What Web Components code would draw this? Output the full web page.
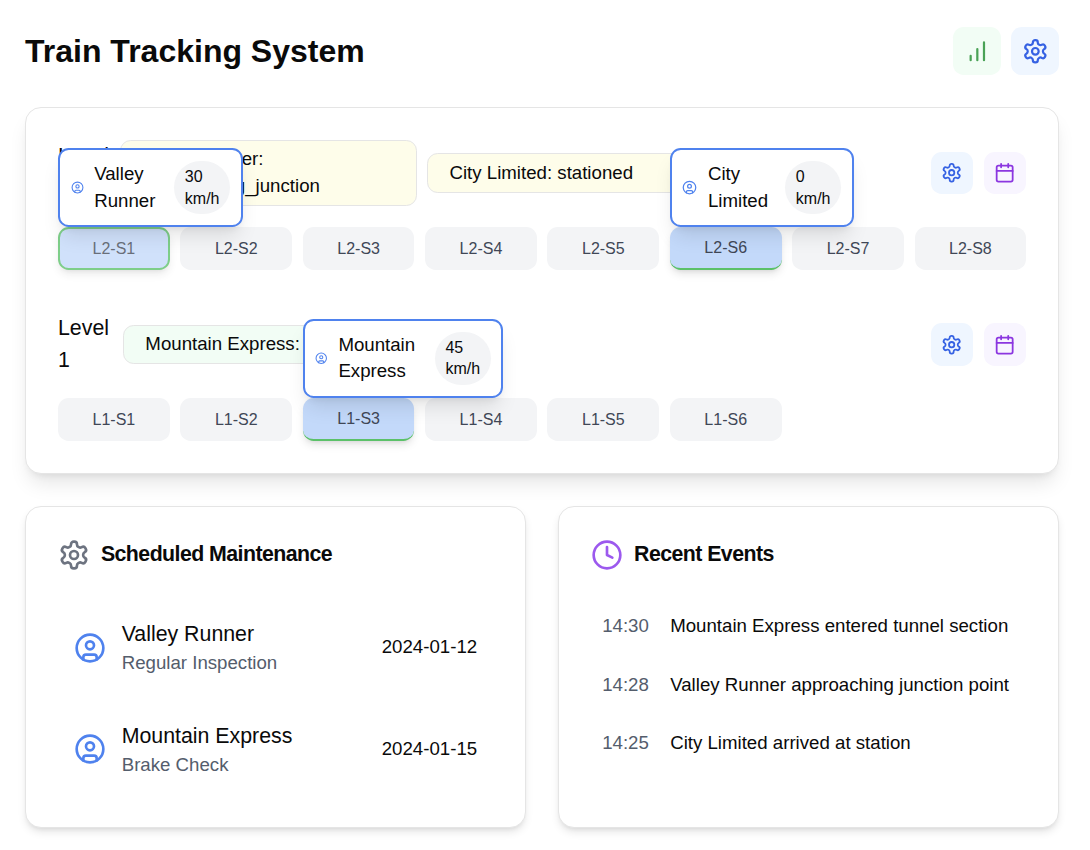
<!DOCTYPE html>
<html lang="en">
<head>
<meta charset="utf-8">
<title>Train Tracking System</title>
<style>
html,body{margin:0;background:#fff}
body{font-family:"Liberation Sans",Arial,sans-serif;color:#0a0a0a;font-size:18.67px;line-height:26.67px;height:850px;overflow:hidden}
</style>
</head>
<body>
<train-app></train-app>
<script>
const define = (name, html, init) => customElements.define(name, class extends HTMLElement {
  constructor() {
    super();
    const t = document.createElement('template');
    t.innerHTML = html;
    this.attachShadow({ mode: 'open' }).appendChild(t.content.cloneNode(true));
  }
  connectedCallback() { if (init) init(this, this.shadowRoot); }
});

const ICONS = {
  gear: '<path d="M12.22 2h-.44a2 2 0 0 0-2 2v.18a2 2 0 0 1-1 1.73l-.43.25a2 2 0 0 1-2 0l-.15-.08a2 2 0 0 0-2.73.73l-.22.38a2 2 0 0 0 .73 2.73l.15.1a2 2 0 0 1 1 1.72v.51a2 2 0 0 1-1 1.74l-.15.09a2 2 0 0 0-.73 2.73l.22.38a2 2 0 0 0 2.73.73l.15-.08a2 2 0 0 1 2 0l.43.25a2 2 0 0 1 1 1.73V20a2 2 0 0 0 2 2h.44a2 2 0 0 0 2-2v-.18a2 2 0 0 1 1-1.73l.43-.25a2 2 0 0 1 2 0l.15.08a2 2 0 0 0 2.73-.73l.22-.39a2 2 0 0 0-.73-2.73l-.15-.08a2 2 0 0 1-1-1.74v-.5a2 2 0 0 1 1-1.74l.15-.09a2 2 0 0 0 .73-2.73l-.22-.38a2 2 0 0 0-2.73-.73l-.15.08a2 2 0 0 1-2 0l-.43-.25a2 2 0 0 1-1-1.73V4a2 2 0 0 0-2-2z"/><circle cx="12" cy="12" r="3"/>',
  bars: '<path d="M12 20V10M18 20V4M6 20v-4"/>',
  calendar: '<path d="M8 2v4M16 2v4M3 10h18"/><rect width="18" height="18" x="3" y="4" rx="2"/>',
  clock: '<circle cx="12" cy="12" r="10"/><path d="M12 6v6l4 2"/>',
  user: '<circle cx="12" cy="12" r="10"/><circle cx="12" cy="10" r="3"/><path d="M7 20.662V19a2 2 0 0 1 2-2h6a2 2 0 0 1 2 2v1.662"/>'
};

define('ui-icon', `<style>:host{display:block;flex:none}svg{display:block;width:100%;height:100%}</style>
<svg viewBox="0 0 24 24" fill="none" stroke="currentColor" stroke-width="2" stroke-linecap="round" stroke-linejoin="round"></svg>`,
(el, root) => {
  const s = el.getAttribute('size');
  el.style.width = el.style.height = s + 'px';
  root.querySelector('svg').innerHTML = ICONS[el.getAttribute('name')];
});

define('icon-button', `<style>
:host{display:flex;align-items:center;justify-content:center;flex:none;width:42.4px;height:42.67px;border-radius:10.67px}
:host([large]){width:48px;height:48px;border-radius:10.67px}
:host([tone=green]){background:#f2fdf5;color:#4aa256}
:host([tone=blue]){background:#eff6ff;color:#3662e3}
:host([tone=purple]){background:#f8f5ff;color:#8b36e0}
</style><slot></slot>`);

define('status-pill', `<style>
:host{display:block;box-sizing:border-box;flex:none;border:1px solid #e5e5e5;border-radius:10.67px;padding:5.33px 21.2px;background:#fefdea;white-space:nowrap;font-size:18.67px;line-height:26.67px}
:host([tone=green]){background:#f2fdf5}
</style><slot></slot>`);

define('train-marker', `<style>
:host{position:absolute;bottom:43.1px;left:0;z-index:5;box-sizing:border-box;height:78.67px;border:2px solid #4f82ee;border-radius:10.67px;background:#fff;padding:10.67px;display:flex;align-items:center;gap:10.5px;color:#0a0a0a;box-shadow:0 13px 20px -4px rgba(0,0,0,.1),0 5px 8px -5px rgba(0,0,0,.1)}
ui-icon{color:#4f82ee}
.name{flex:1;font-size:18.67px;line-height:26.67px}
.speed{box-sizing:border-box;width:56px;flex:none;font-size:16px;line-height:21.33px;background:#f3f4f6;border-radius:999px;padding:5.33px 10.67px}
</style><ui-icon name="user"></ui-icon><div class="name"><slot></slot></div><div class="speed"></div>`,
(el, root) => {
  el.style.width = el.getAttribute('width') + 'px';
  const ic = root.querySelector('ui-icon'), s = el.getAttribute('icon');
  ic.style.width = ic.style.height = s + 'px';
  root.querySelector('.speed').innerHTML = el.getAttribute('speed') + '<br>km/h';
});

define('track-section', `<style>
:host{display:block;position:relative;height:42.67px}
.cell{box-sizing:border-box;height:100%;display:flex;align-items:center;justify-content:center;border-radius:10.67px;background:#f3f4f6;color:#404756;font-size:16px;line-height:21.33px}
:host([state=busy]) .cell{background:#c3d9fa;border-bottom:2px solid #5bc169;box-shadow:0 5px 8px -1px rgba(0,0,0,.1),0 3px 5px -3px rgba(0,0,0,.1)}
:host([state=pulse]) .cell{background:#c3d9fa;border:2px solid #5bc169;opacity:.78;box-shadow:0 5px 8px -1px rgba(0,0,0,.1),0 3px 5px -3px rgba(0,0,0,.1)}
</style><div class="cell"></div><slot></slot>`,
(el, root) => { root.querySelector('.cell').textContent = el.getAttribute('label'); });

define('track-level', `<style>
:host{display:block}
.head{display:flex;align-items:center;gap:10.67px;margin-bottom:21.33px}
.label{flex:none;width:54.5px;font-size:21.33px;line-height:32px;margin:-.8px 0 .8px}
:host([narrow]) .label{width:51.7px}
.pills{display:flex;align-items:center;gap:10.67px;flex:1;min-width:0}
.tools{display:flex;gap:10.67px}
.tracks{display:grid;grid-template-columns:repeat(8,1fr);gap:10.6px}
</style>
<div class="head"><div class="label"><slot name="label"></slot></div><div class="pills"><slot name="pill"></slot></div>
<div class="tools"><icon-button tone="blue"><ui-icon name="gear" size="21.33"></ui-icon></icon-button><icon-button tone="purple"><ui-icon name="calendar" size="21.33"></ui-icon></icon-button></div></div>
<div class="tracks"><slot></slot></div>`);

define('ui-card', `<style>
:host{display:block;box-sizing:border-box;border:1px solid #e5e5e5;border-radius:16px;padding:32px;background:#fff;box-shadow:0 5px 8px -1px rgba(0,0,0,.1),0 3px 5px -3px rgba(0,0,0,.1)}
:host([raised]){box-shadow:0 13px 20px -4px rgba(0,0,0,.1),0 5px 8px -5px rgba(0,0,0,.1)}
</style><slot></slot>`);

define('card-title', `<style>
:host{display:flex;align-items:center;gap:10.9px;height:32px;margin-bottom:31.7px}
h2{margin:0 0 2px;font-size:21.33px;line-height:32px;font-weight:700;letter-spacing:-.56px}
</style><slot name="icon"></slot><h2><slot></slot></h2>`);

define('maintenance-item', `<style>
:host{display:flex;align-items:center;gap:15.7px;padding:16px;margin-bottom:10.67px}
ui-icon{color:#4f82ee}
.info{flex:1}.name{font-size:21.33px;line-height:32px}
.task{color:#545d6c}
</style><ui-icon name="user" size="32"></ui-icon><div class="info"><div class="name"><slot></slot></div><div class="task"><slot name="task"></slot></div></div><div><slot name="date"></slot></div>`);

define('event-item', `<style>
:host{display:flex;gap:21.33px;padding:10.67px 11px;margin-bottom:10.67px;white-space:nowrap}
.time{color:#545d6c}
</style><div class="time"><slot name="time"></slot></div><div><slot></slot></div>`);

define('train-app', `<style>
:host{display:block;padding:27px 30.7px 0 25px}
header{display:flex;align-items:center;justify-content:space-between;height:48px;margin-bottom:32px}
h1{margin:0;font-size:32px;line-height:42px;font-weight:700}
nav{display:flex;gap:10.2px}
track-level + track-level{margin-top:42.67px}
.bottom{display:grid;grid-template-columns:1fr 1fr;gap:32px;margin-top:32px}
.bottom ui-card{height:322px}
</style>
<header><h1>Train Tracking System</h1><nav>
<icon-button large tone="green"><ui-icon name="bars" size="26.67"></ui-icon></icon-button>
<icon-button large tone="blue"><ui-icon name="gear" size="26.67"></ui-icon></icon-button></nav></header>
<ui-card raised>
<track-level narrow><span slot="label">Level 2</span>
<status-pill slot="pill" style="width:296.3px">Valley Runner:<br>approaching_junction</status-pill>
<status-pill slot="pill" style="width:280px">City Limited: stationed</status-pill>
<track-section label="L2-S1" state="pulse"><train-marker width="184.8" icon="13" speed="30">Valley Runner</train-marker></track-section>
<track-section label="L2-S2"></track-section><track-section label="L2-S3"></track-section><track-section label="L2-S4"></track-section><track-section label="L2-S5"></track-section>
<track-section label="L2-S6" state="busy"><train-marker width="184" icon="15" speed="0">City Limited</train-marker></track-section>
<track-section label="L2-S7"></track-section><track-section label="L2-S8"></track-section></track-level>
<track-level><span slot="label">Level 1</span>
<status-pill slot="pill" tone="green">Mountain Express: in_tunnel</status-pill>
<track-section label="L1-S1"></track-section><track-section label="L1-S2"></track-section>
<track-section label="L1-S3" state="busy"><train-marker width="200.7" icon="12.5" speed="45">Mountain Express</train-marker></track-section>
<track-section label="L1-S4"></track-section><track-section label="L1-S5"></track-section><track-section label="L1-S6"></track-section></track-level>
</ui-card>
<div class="bottom">
<ui-card><card-title><ui-icon slot="icon" name="gear" size="32" style="color:#6d7380"></ui-icon>Scheduled Maintenance</card-title>
<maintenance-item>Valley Runner<span slot="task">Regular Inspection</span><span slot="date">2024-01-12</span></maintenance-item>
<maintenance-item>Mountain Express<span slot="task">Brake Check</span><span slot="date">2024-01-15</span></maintenance-item></ui-card>
<ui-card><card-title><ui-icon slot="icon" name="clock" size="32" style="color:#9c59ee"></ui-icon>Recent Events</card-title>
<event-item><span slot="time">14:30</span>Mountain Express entered tunnel section</event-item>
<event-item><span slot="time">14:28</span>Valley Runner approaching junction point</event-item>
<event-item><span slot="time">14:25</span>City Limited arrived at station</event-item></ui-card>
</div>`);
</script>
</body>
</html>
